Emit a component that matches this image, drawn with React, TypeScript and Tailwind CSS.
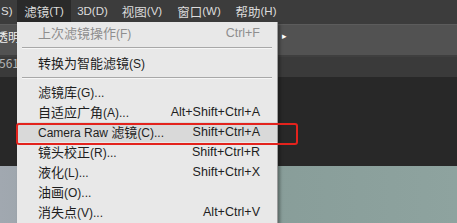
import React from "react"

type MenuItem = {
  label: string
  shortcut?: string
  disabled?: boolean
  marked?: boolean
}

// widths follow the Photoshop menu bar slots
const topMenu = [
  { label: "滤镜(T)", w: "w-[54px]", active: true },
  { label: "3D(D)", w: "w-[43px]" },
  { label: "视图(V)", w: "w-[56px]" },
  { label: "窗口(W)", w: "w-[58px]" },
  { label: "帮助(H)", w: "w-[56px]" },
]

const filterItems: MenuItem[] = [
  { label: "滤镜库(G)..." },
  { label: "自适应广角(A)...", shortcut: "Alt+Shift+Ctrl+A" },
  { label: "Camera Raw 滤镜(C)...", shortcut: "Shift+Ctrl+A", marked: true },
  { label: "镜头校正(R)...", shortcut: "Shift+Ctrl+R" },
  { label: "液化(L)...", shortcut: "Shift+Ctrl+X" },
  { label: "油画(O)..." },
  { label: "消失点(V)...", shortcut: "Alt+Ctrl+V" },
]

// Chinese runs keep the CJK face, Latin runs get an Arial-width face
function Mixed({ text, latin }: { text: string; latin: string }) {
  const parts = text.split(/([\u4e00-\u9fff]+)/).filter(Boolean)
  return (
    <>
      {parts.map((p, i) =>
        /[\u4e00-\u9fff]/.test(p) ? (
          <span key={i}>{p}</span>
        ) : (
          <span key={i} className={latin}>
            {p}
          </span>
        )
      )}
    </>
  )
}

const menuLatin = "font-['Liberation_Sans',sans-serif] text-[12px]"
const barLatin = "font-['Liberation_Sans',sans-serif] text-[11.5px]"

function Row({ item }: { item: MenuItem }) {
  return (
    <div
      className={`relative flex h-[20px] items-center justify-between pl-[21px] pr-[17px] ${
        item.marked ? "bg-[#d9d9d9]" : ""
      } ${item.disabled ? "text-[#8e8e8e]" : "text-[#1e1e1e]"}`}
    >
      <span>
        <Mixed text={item.label} latin={menuLatin} />
      </span>
      {item.shortcut && (
        <span className="font-['Liberation_Sans',sans-serif] text-[12.5px]">{item.shortcut}</span>
      )}
      {item.marked && (
        <div
          className="absolute top-[1px] -bottom-[3px] -left-[1px] -right-[21px] rounded-[3px] border-2 border-[#e3231d]"
          aria-hidden="true"
        />
      )}
    </div>
  )
}

function Separator({ height }: { height: string }) {
  return (
    <div className={`flex ${height} items-center px-[5px]`}>
      <div className="h-[2px] w-full border-t border-[#a8a8a8] border-b border-b-[#f6f6f6]" />
    </div>
  )
}

export default function App() {
  return (
    <div className="relative flex h-[223px] w-[457px] flex-col overflow-hidden bg-[#282828] font-['Noto_Sans_CJK_SC',sans-serif]">
      {/* menu bar */}
      <div className="flex h-[24px] shrink-0 items-center bg-[#3c3c3c] text-[12.5px] text-[#dcdcdc]">
        <span className={`w-[17px] pl-[1px] ${barLatin}`}>S)</span>
        {topMenu.map((m) => (
          <span
            key={m.label}
            className={`flex h-full shrink-0 items-center justify-center whitespace-nowrap ${m.w} ${
              m.active ? "bg-[#2a2a2a]" : ""
            }`}
          >
            <Mixed text={m.label} latin={barLatin} />
          </span>
        ))}
      </div>

      {/* options bar */}
      <div className="flex h-[31px] shrink-0 items-start border-t border-[#5c5c5c] bg-[#525252] pt-[3px] text-[12px] text-[#efefef]">
        <span className="-ml-[4px]">透明度</span>
        <span className="ml-auto mr-[170px] text-[9px] leading-[16px] text-white">▸</span>
      </div>

      {/* document tabs */}
      <div className="flex h-[22px] shrink-0 items-start border-t-2 border-[#3f3f3f] bg-[#3a3a3a] text-[12px] leading-[12px] text-[#b4b4b4]">
        <span className="-ml-[1px]">561</span>
      </div>

      {/* workspace */}
      <div className="flex flex-1 flex-col">
        <div className="flex-1 bg-[#282828]" />
        <div className="h-[57px] bg-gradient-to-r from-[#a1a8b0] via-[#879c98] to-[#8ea39f]" />
      </div>

      {/* filter dropdown */}
      <div className="absolute left-[17px] top-[22px] w-[261px] border-r border-[#9c9c9c] bg-[#e8e8e8] pb-[4px] pt-[1px] text-[13px] shadow-[2px_2px_3px_rgba(0,0,0,0.35)]">
        <Row item={{ label: "上次滤镜操作(F)", shortcut: "Ctrl+F", disabled: true }} />
        <Separator height="h-[10px]" />
        <Row item={{ label: "转换为智能滤镜(S)" }} />
        <Separator height="h-[9px]" />
        {filterItems.map((item) => (
          <Row key={item.label} item={item} />
        ))}
      </div>
    </div>
  )
}
